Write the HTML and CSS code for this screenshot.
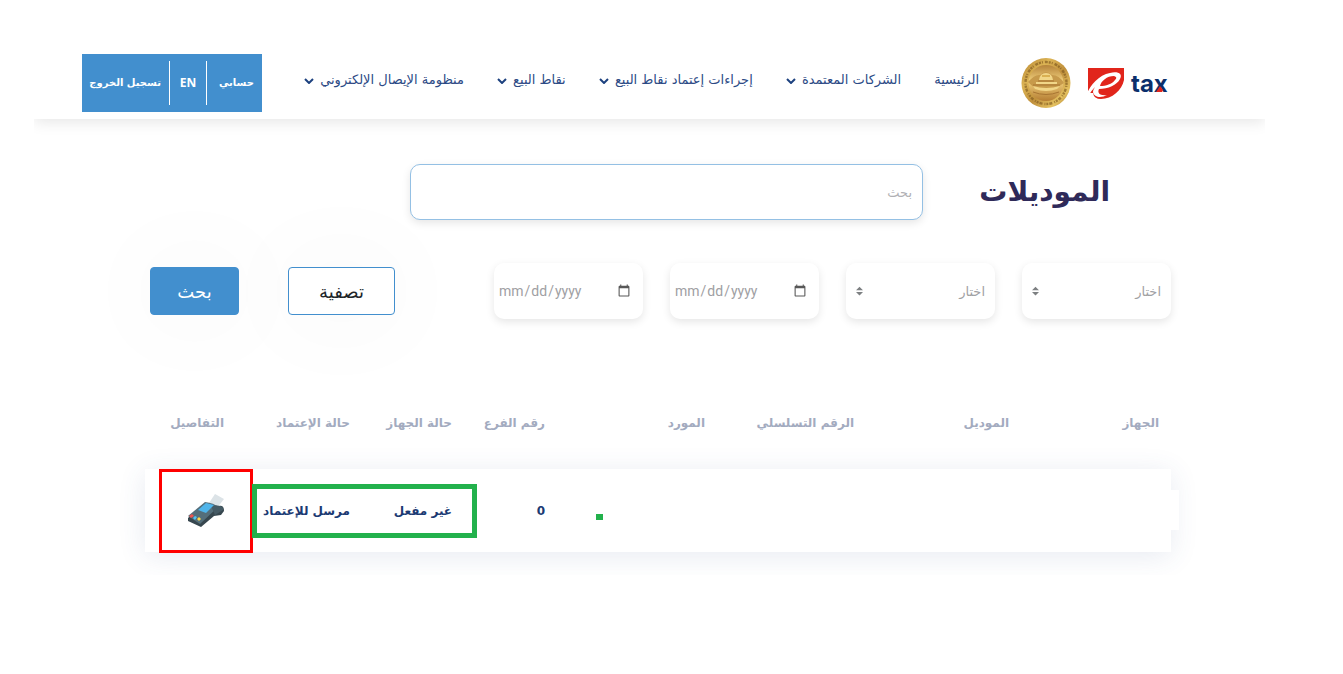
FILE: index.html
```html
<!DOCTYPE html>
<html lang="ar" dir="rtl">
<head>
<meta charset="utf-8">
<title>الموديلات</title>
<link rel="stylesheet" href="styles.css">
</head>
<body>
<header class="topbar">
  <a class="brand" href="#" aria-label="e tax">
    <svg class="brand-tax" viewBox="0 0 83 34" width="83" height="34" direction="ltr">
      <path fill="#e1251b" d="M1 2H37V14C35 24 25 33 14 33Q7 33 6 27L1 27Z"/>
      <path fill="#fff" d="M0 28C3 19 12 9 23 7C31 5 36 8 33 13C30 19 21 23 12 23C10 27 13 30 20 29C15 32 7 32 6 26Q6 24 8 21Q4 25 2 29L0 34Z"/>
      <path fill="#e1251b" d="M13 20C14 15 20 10 27 10Q31 11 28 14C25 18 19 20 13 20Z"/>
      <text class="brand-word" x="44" y="26">tax</text>
      <path fill="#e1251b" d="M69 26L73 20L76 24L75 26Z"/>
    </svg>
    <svg class="brand-seal" viewBox="0 0 50 52" width="50" height="52">
      <defs>
        <linearGradient id="gold" x1="0" y1="0" x2="1" y2="1">
          <stop offset="0" stop-color="#b5832f"/><stop offset=".3" stop-color="#dcb455"/>
          <stop offset=".55" stop-color="#c0903c"/><stop offset=".8" stop-color="#e5c261"/><stop offset="1" stop-color="#94601d"/>
        </linearGradient>
        <linearGradient id="core" x1="0" y1="0" x2="0" y2="1">
          <stop offset="0" stop-color="#b5833a"/><stop offset=".45" stop-color="#f0cf7b"/><stop offset="1" stop-color="#b57d33"/>
        </linearGradient>
      </defs>
      <ellipse cx="25" cy="26" rx="24.5" ry="25" fill="url(#gold)"/>
      <ellipse cx="25" cy="26" rx="20.5" ry="21" fill="none" stroke="#80591f" stroke-opacity=".65" stroke-width="2.4" stroke-dasharray="2 1 1 2 3 1"/>
      <ellipse cx="25" cy="26" rx="17.5" ry="18" fill="url(#core)"/>
      <path fill="#c79a4b" d="M7 25Q14 17 19 18Q25 12 31 18Q38 18 43 26Q33 33 25 33Q14 33 7 25Z"/>
      <path fill="#f1d688" d="M18 23Q19 16 25 16Q31 16 32 23ZM15 25H36V27H15ZM12 29Q25 33 39 29L36 32Q25 36 14 32Z"/>
      <path fill="none" stroke="#a87532" d="M17 24H33M12 28H39M12 35Q25 40 38 35"/>
      <path fill="#d9b052" d="M21 18H29V20H21Z"/>
    </svg>
  </a>
  <nav class="menu">
    <a href="#">الرئيسية</a>
    <a href="#">الشركات المعتمدة <svg class="chev" viewBox="0 0 10 6"><path d="M1 1L5 5L9 1"/></svg></a>
    <a href="#">إجراءات إعتماد نقاط البيع <svg class="chev" viewBox="0 0 10 6"><path d="M1 1L5 5L9 1"/></svg></a>
    <a href="#">نقاط البيع <svg class="chev" viewBox="0 0 10 6"><path d="M1 1L5 5L9 1"/></svg></a>
    <a href="#">منظومة الإيصال الإلكتروني <svg class="chev" viewBox="0 0 10 6"><path d="M1 1L5 5L9 1"/></svg></a>
  </nav>
  <div class="account">
    <a href="#">حسابي</a>
    <a href="#" class="lang">EN</a>
    <a href="#">تسجيل الخروج</a>
  </div>
</header>

<main class="content">
  <form class="search-form">
    <div class="search-row">
      <h1>الموديلات</h1>
      <input class="field search" type="text" placeholder="بحث" aria-label="بحث">
    </div>
    <div class="filters">
      <div class="picker">
        <select class="field" aria-label="الموديل"><option>اختار</option></select>
        <svg class="sort" viewBox="0 0 8 10"><path d="M4 0L8 4H0ZM4 10L8 6H0Z"/></svg>
      </div>
      <div class="picker">
        <select class="field" aria-label="الحالة"><option>اختار</option></select>
        <svg class="sort" viewBox="0 0 8 10"><path d="M4 0L8 4H0ZM4 10L8 6H0Z"/></svg>
      </div>
      <input class="field date" type="date" dir="ltr" lang="en-US" aria-label="من تاريخ">
      <input class="field date" type="date" dir="ltr" lang="en-US" aria-label="إلى تاريخ">
      <div class="actions">
        <button type="reset" class="btn btn-outline">تصفية</button>
        <button type="submit" class="btn btn-solid">بحث</button>
      </div>
    </div>
  </form>

  <section class="results">
    <table class="devices">
      <colgroup>
        <col class="c-device"><col class="c-model"><col class="c-serial"><col class="c-vendor">
        <col class="c-branch"><col class="c-state"><col class="c-approval"><col class="c-details">
      </colgroup>
      <thead>
        <tr><th>الجهاز</th><th>الموديل</th><th>الرقم التسلسلي</th><th>المورد</th><th>رقم الفرع</th><th>حالة الجهاز</th><th>حالة الإعتماد</th><th>التفاصيل</th></tr>
      </thead>
      <tbody>
        <tr>
          <td></td><td></td><td></td><td></td><td>0</td><td>غير مفعل</td><td>مرسل للإعتماد</td>
          <td>
            <a class="details" href="#" aria-label="التفاصيل">
              <svg viewBox="0 0 36 34" width="36" height="34">
                <path fill="#dce3e7" d="M27 0L36 5L29 14L21 9Z"/>
                <path fill="#37474f" d="M0 24L17 9L31 12Q36 11 36 17L33 21L26 22L13 33L0 27Z"/>
                <path fill="#546e7a" d="M0 22L17 8Q26 9 30 13L12 30Z"/>
                <path fill="#455a64" d="M22 10L28 12Q36 11 35 16L27 21Z"/>
                <path fill="#4fb4ea" d="M10 16L18 9L26 11L18 19Z"/>
                <path fill="#ef5350" d="M1 22L4 20L6 22L3 24Z"/>
                <path fill="#4fc3f7" d="M5 24L7 22L9 23L7 26Z"/>
                <path fill="#fdd849" d="M9 25L11 23L13 25L11 27Z"/>
              </svg>
            </a>
          </td>
        </tr>
      </tbody>
    </table>
    <span class="cover"></span>
    <span class="mark mark-red"></span>
    <span class="mark mark-green"></span>
    <span class="mark mark-dot"></span>
  </section>
</main>
</body>
</html>
```
FILE: styles.css
```css
* { box-sizing: border-box; }

body {
  margin: 0;
  background: #fff;
  font-family: "DejaVu Sans", sans-serif;
  color: #1b3a73;
}

a { color: inherit; text-decoration: none; }

.topbar {
  display: flex;
  align-items: center;
  margin: 0 78px 0 34px;
  padding: 54px 95px 7px 48px;
  box-shadow: 0 3px 14px rgba(0, 0, 0, .1);
  clip-path: inset(0 0 -20px 0);
}

.brand { display: flex; align-items: center; gap: 16px; }
.brand-word {
  font: 700 24px "Inter", sans-serif;
  fill: #0b2f6b;
}

.menu {
  flex: 1;
  display: flex;
  justify-content: space-between;
  margin: 0 42px 6px;
  font-size: 13px;
  line-height: 24px;
  white-space: nowrap;
  color: #2c4a85;
}
.chev {
  width: 10px;
  height: 6px;
  margin-right: 2px;
  fill: none;
  stroke: #1d417f;
  stroke-width: 2;
  vertical-align: middle;
}

.account {
  display: flex;
  align-items: center;
  width: 180px;
  height: 58px;
  background: #428fce;
  color: #fff;
  font-size: 10px;
  font-weight: 700;
  white-space: nowrap;
}
.account a { line-height: 44px; padding: 0 8px; }
.account a:first-child { flex: 0 0 55px; }
.account .lang {
  flex: 0 0 38px;
  text-align: center;
  border: solid #fff;
  border-width: 0 1px;
  font-family: "Open Sans", sans-serif;
  font-size: 12px;
}

.content { padding: 45px 172px 0 150px; }

.search-row { display: flex; align-items: center; padding: 0 61px 0 260px; }
h1 {
  flex: 0 0 187px;
  margin: 0;
  font-size: 28px;
  line-height: 56px;
  color: #2f2a59;
}

.field {
  width: 100%;
  height: 56px;
  border: 0;
  border-radius: 10px;
  background: #fff;
  box-shadow: 0 3px 8px rgba(0, 0, 0, .1);
  padding: 0 10px;
  font: 13px "DejaVu Sans", sans-serif;
  color: #a0a0a3;
}
.search { border: 1px solid #94c0e4; }
.search::placeholder { color: #b0b0b4; }

.filters {
  display: grid;
  grid-template-columns: repeat(4, 1fr) 317px;
  gap: 27px;
  align-items: center;
  margin-top: 43px;
}
.picker { position: relative; }
.picker .field { appearance: none; }
.sort {
  position: absolute;
  left: 10px;
  top: 23px;
  width: 7px;
  height: 10px;
  fill: #7d8082;
}
.date { padding: 0 10px 0 4px; font: 14px Roboto, sans-serif; }
.date::-webkit-calendar-picker-indicator { opacity: .65; }

.actions { display: flex; justify-content: flex-end; gap: 49px; }
.btn {
  height: 48px;
  border: 1px solid #428fce;
  border-radius: 4px;
  font: 18px "DejaVu Sans", sans-serif;
  box-shadow: 0 0 100px rgba(0, 0, 0, .05);
}
.btn-outline { width: 107px; background: #fff; color: #212529; }
.btn-solid { width: 89px; background: #428fce; color: #fff; }

.results {
  position: relative;
  margin: 74px -30px 0 -35px;
  padding: 0 30px 23px;
  overflow: hidden;
}
.devices {
  width: 100%;
  table-layout: fixed;
  border-collapse: collapse;
  white-space: nowrap;
  text-align: right;
  font-size: 12px;
  font-weight: 700;
}
.devices thead tr { height: 76px; vertical-align: top; }
.devices th { padding: 0 12px 0 0; line-height: 60px; color: #a3abbf; }
.devices td { height: 83px; padding: 0 12px 0 0; }
.devices tbody tr { box-shadow: 0 4px 28px rgba(60, 80, 140, .12); background: #fff; }
.c-device { width: 150px; }
.c-model { width: 155px; }
.c-serial { width: 149px; }
.c-vendor { width: 160px; }
.c-branch { width: 93px; }
.c-state { width: 102px; }
.c-approval { width: 126px; }
.details { display: block; width: 36px; height: 34px; }

.cover, .mark { position: absolute; }
.cover { right: 22px; top: 97px; width: 8px; height: 40px; background: #fff; }
.mark-red { left: 44px; top: 76px; width: 94px; height: 84px; border: 3px solid #f00; }
.mark-green { left: 137px; top: 91px; width: 225px; height: 54px; border: 5px solid #22b14c; }
.mark-dot { left: 481px; top: 121px; width: 7px; height: 6px; background: #22b14c; }
```
